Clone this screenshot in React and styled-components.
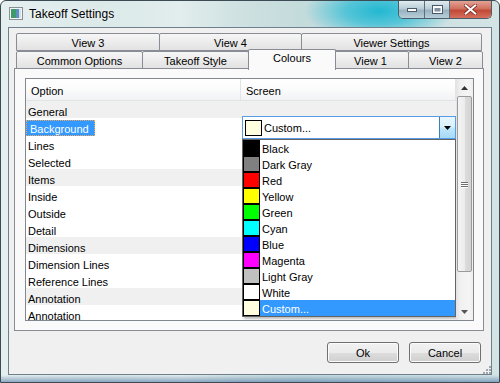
import styled, { createGlobalStyle } from "styled-components";

const GlobalStyle = createGlobalStyle`
  html, body {
    margin: 0;
    padding: 0;
    background: #ffffff;
  }
  * {
    box-sizing: border-box;
  }
`;

const topTabs = [
  { label: "View 3", width: 144 },
  { label: "View 4", width: 143 },
  { label: "Viewer Settings", width: 181 },
];

const bottomTabs = [
  { label: "Common Options", width: 127 },
  { label: "Takeoff Style", width: 107 },
  { label: "Colours", width: 84, active: true },
  { label: "View 1", width: 77 },
  { label: "View 2", width: 75 },
];

const options = [
  { label: "General", group: true },
  { label: "Background", selected: true },
  { label: "Lines" },
  { label: "Selected" },
  { label: "Items", group: true },
  { label: "Inside" },
  { label: "Outside" },
  { label: "Detail" },
  { label: "Dimensions", group: true },
  { label: "Dimension Lines" },
  { label: "Reference Lines" },
  { label: "Annotation", group: true },
  { label: "Annotation" },
];

const colours = [
  ["Black", "#000000"],
  ["Dark Gray", "#808080"],
  ["Red", "#ff0000"],
  ["Yellow", "#ffff00"],
  ["Green", "#00ff00"],
  ["Cyan", "#00ffff"],
  ["Blue", "#0000ff"],
  ["Magenta", "#ff00ff"],
  ["Light Gray", "#c0c0c0"],
  ["White", "#ffffff"],
  ["Custom...", "#ffffe0"],
];

export default function App() {
  return (
    <>
      <GlobalStyle />
      <Window>
        <TitleBar>
          <AppIcon>
            <svg width="14" height="13" viewBox="0 0 14 13">
              <rect x="0.5" y="0.5" width="13" height="12" fill="#f4f4f4" stroke="#8a8f96" />
              <rect x="2" y="2" width="5" height="9" fill="#3f9a6a" />
              <rect x="7" y="2" width="3" height="9" fill="#5c8fc4" />
              <rect x="10" y="2" width="2" height="9" fill="#d7dde4" />
            </svg>
          </AppIcon>
          <Title>Takeoff Settings</Title>
          <CaptionButtons>
            <CaptionButton $kind="min">
              <svg width="10" height="5" viewBox="0 0 10 5">
                <rect x="0.5" y="1.5" width="9" height="3" fill="#ffffff" stroke="#4a5a6a" />
              </svg>
            </CaptionButton>
            <CaptionButton $kind="max">
              <svg width="11" height="9" viewBox="0 0 11 9">
                <rect x="0.5" y="0.5" width="10" height="8" fill="#ffffff" stroke="#4a5a6a" />
                <rect x="2.5" y="3" width="6" height="3.5" fill="#7f92a4" />
              </svg>
            </CaptionButton>
            <CaptionButton $kind="close">
              <svg width="13" height="11" viewBox="0 0 13 11">
                <path
                  d="M1 1 L12 10 M12 1 L1 10"
                  stroke="#7a2a22"
                  strokeWidth="3.6"
                  strokeLinecap="round"
                />
                <path
                  d="M1.5 1.3 L11.5 9.7 M11.5 1.3 L1.5 9.7"
                  stroke="#ffffff"
                  strokeWidth="2"
                  strokeLinecap="round"
                />
              </svg>
            </CaptionButton>
          </CaptionButtons>
        </TitleBar>

        <Client>
          <TabStrip>
            <TabRow>
              {topTabs.map((t) => (
                <Tab key={t.label} $width={t.width}>
                  {t.label}
                </Tab>
              ))}
            </TabRow>
            <TabRow>
              {bottomTabs.map((t) => (
                <Tab key={t.label} $width={t.width} $active={t.active}>
                  {t.label}
                </Tab>
              ))}
            </TabRow>
          </TabStrip>

          <Panel>
            <ListView>
              <ListMain>
                <Header>
                  <HeaderCell $width={215}>Option</HeaderCell>
                  <HeaderCell>Screen</HeaderCell>
                </Header>
                <Body>
                  {options.map((o, i) => (
                    <Row key={i} $group={o.group}>
                      {o.selected ? <Selected>{o.label}</Selected> : o.label}
                    </Row>
                  ))}

                  <Combo>
                    <Swatch $color="#ffffe0" />
                    <ComboText>Custom...</ComboText>
                    <ComboButton>
                      <svg width="7" height="4" viewBox="0 0 7 4">
                        <path d="M0 0 H7 L3.5 4 Z" fill="#000" />
                      </svg>
                    </ComboButton>
                  </Combo>

                  <DropList>
                    {colours.map(([name, c]) => (
                      <DropItem key={name} $active={name === "Custom..."}>
                        <Swatch $color={c} />
                        <span>{name}</span>
                      </DropItem>
                    ))}
                  </DropList>
                </Body>
              </ListMain>

              <ScrollBar>
                <ScrollArrow>
                  <svg width="7" height="4" viewBox="0 0 7 4">
                    <path d="M0 4 H7 L3.5 0 Z" fill="#333" />
                  </svg>
                </ScrollArrow>
                <Thumb>
                  <Grip />
                  <Grip />
                  <Grip />
                </Thumb>
                <Track />
                <ScrollArrow>
                  <svg width="7" height="4" viewBox="0 0 7 4">
                    <path d="M0 0 H7 L3.5 4 Z" fill="#555" />
                  </svg>
                </ScrollArrow>
              </ScrollBar>
            </ListView>
          </Panel>

          <ButtonRow>
            <Button>Ok</Button>
            <Button>Cancel</Button>
          </ButtonRow>

          <SizeGrip>
            <svg width="9" height="9" viewBox="0 0 9 9">
              {[
                [7, 1],
                [7, 4],
                [4, 4],
                [7, 7],
                [4, 7],
                [1, 7],
              ].map(([x, y]) => (
                <rect key={`${x}-${y}`} x={x} y={y} width="2" height="2" fill="#a0a6ad" />
              ))}
            </svg>
          </SizeGrip>
        </Client>
      </Window>
    </>
  );
}

const Window = styled.div`
  width: 500px;
  height: 383px;
  border: 1px solid #3d4b54;
  border-radius: 6px 6px 0 0;
  padding: 0 7px 7px 7px;
  display: flex;
  flex-direction: column;
  font-family: "Liberation Sans", Arial, sans-serif;
  background:
    radial-gradient(ellipse 75px 30px at 378px 10px, #22b8d2 0%, rgba(38, 186, 212, 0.7) 45%, rgba(38, 186, 212, 0) 100%),
    linear-gradient(0deg, rgba(70, 110, 160, 0.55) 0, rgba(70, 110, 160, 0) 7px),
    linear-gradient(90deg, #e6efef 0%, #dbe9e9 20%, #e2eded 36%, #cfe1e1 48%, #c4dbdc 60%, #d3e4e5 100%);
`;

const TitleBar = styled.div`
  height: 26px;
  display: flex;
  align-items: flex-start;
`;

const AppIcon = styled.div`
  margin: 6px 0 0 1px;
  width: 14px;
  height: 13px;
  display: flex;
`;

const Title = styled.div`
  margin: 6px 0 0 6px;
  font-size: 12px;
  line-height: 14px;
  color: #000;
  text-shadow: 0 0 6px rgba(255, 255, 255, 0.9);
`;

const CaptionButtons = styled.div`
  margin-left: auto;
  display: flex;
  height: 18px;
  border: 1px solid #4b5d6b;
  border-top: none;
  border-radius: 0 0 5px 5px;
  overflow: hidden;
`;

const CaptionButton = styled.div`
  width: ${(p) => (p.$kind === "close" ? 42 : 25)}px;
  display: flex;
  align-items: center;
  justify-content: center;
  border-left: ${(p) => (p.$kind === "min" ? "none" : "1px solid #5c6e7c")};
  background: ${(p) =>
    p.$kind === "close"
      ? "linear-gradient(180deg, #e3a395 0%, #d0705f 45%, #c14a36 55%, #d6705e 100%)"
      : "linear-gradient(180deg, #e1ecef 0%, #b9cdd6 45%, #98b2c0 55%, #b7cfd9 100%)"};
`;

const Client = styled.div`
  position: relative;
  flex: 1;
  border: 1px solid #6f7f8b;
  background: #f0f0f0;
  padding: 5px 7px 0 5px;
  display: flex;
  flex-direction: column;
  font-size: 11px;
  color: #000;
`;

const TabStrip = styled.div`
  padding-left: 2px;
  display: flex;
  flex-direction: column;
`;

const TabRow = styled.div`
  display: flex;
  height: 18px;
`;

const Tab = styled.div`
  position: relative;
  width: ${(p) => p.$width + (p.$active ? 4 : 0)}px;
  height: ${(p) => (p.$active ? 21 : 18)}px;
  margin-top: ${(p) => (p.$active ? -2 : 0)}px;
  margin-left: -1px;
  margin-right: ${(p) => (p.$active ? -3 : 0)}px;
  padding-top: ${(p) => (p.$active ? 2 : 3)}px;
  z-index: ${(p) => (p.$active ? 2 : 1)};
  border: 1px solid #898c95;
  border-bottom: ${(p) => (p.$active ? "none" : "1px solid #898c95")};
  border-radius: 2px 2px 0 0;
  text-align: center;
  line-height: 12px;
  background: ${(p) =>
    p.$active ? "#fafafa" : "linear-gradient(180deg, #f6f6f6 0%, #ececec 50%, #e2e2e2 100%)"};
  white-space: nowrap;

  &:first-child {
    margin-left: ${(p) => (p.$active ? -2 : 0)}px;
  }
`;

const Panel = styled.div`
  width: 470px;
  height: 263px;
  margin-top: -1px;
  border: 1px solid #898c95;
  background: #fafafa;
  padding: 9px 9px 9px 10px;
  display: flex;
`;

const ListView = styled.div`
  flex: 1;
  border: 1px solid #828790;
  background: #ffffff;
  display: flex;
  overflow: hidden;
`;

const ListMain = styled.div`
  flex: 1;
  display: flex;
  flex-direction: column;
  min-width: 0;
`;

const Header = styled.div`
  height: 22px;
  flex: none;
  display: flex;
  background: linear-gradient(180deg, #ffffff 0%, #fbfbfc 50%, #f1f2f4 100%);
  border-bottom: 1px solid #e2e3e5;
`;

const HeaderCell = styled.div`
  ${(p) => (p.$width ? `width: ${p.$width}px;` : "flex: 1;")}
  padding: 6px 0 0 5px;
  border-right: 1px solid #e3e4e6;
  line-height: 12px;
`;

const Body = styled.div`
  position: relative;
  flex: 1;
  overflow: hidden;
`;

const Row = styled.div`
  flex: none;
  height: 17px;
  padding: 4px 0 0 2px;
  line-height: 15px;
  background: ${(p) => (p.$group ? "#f0f0f0" : "#ffffff")};
  white-space: nowrap;
`;

const Selected = styled.span`
  display: inline-block;
  margin: -2px 0 0 -2px;
  height: 16px;
  line-height: 16px;
  padding: 0 5px 0 3px;
  background: #3399ff;
  color: #ffffff;
  border: 1px dotted #f0a860;
  vertical-align: top;
`;

const Combo = styled.div`
  position: absolute;
  left: 216px;
  top: 15px;
  width: 214px;
  height: 23px;
  border: 1px solid #569de5;
  background: #ffffff;
  display: flex;
  align-items: center;
  padding-left: 2px;
`;

const ComboText = styled.span`
  margin-left: 2px;
  padding-top: 1px;
`;

const ComboButton = styled.div`
  margin-left: auto;
  width: 16px;
  height: 21px;
  border-left: 1px solid #3c7fb1;
  background: linear-gradient(180deg, #eaf6fd 0%, #d9f0fc 45%, #bee6fd 55%, #a7d9f5 100%);
  display: flex;
  align-items: center;
  justify-content: center;
`;

const Swatch = styled.span`
  flex: none;
  width: 17px;
  height: 16px;
  border: 1px solid #000000;
  background: ${(p) => p.$color};
`;

const DropList = styled.div`
  position: absolute;
  left: 216px;
  top: 38px;
  width: 214px;
  border: 1px solid #646464;
  background: #ffffff;
  box-shadow: 2px 2px 2px rgba(0, 0, 0, 0.25);
  z-index: 3;
`;

const DropItem = styled.div`
  height: 16px;
  display: flex;
  align-items: center;
  background: ${(p) => (p.$active ? "#3399ff" : "#ffffff")};
  color: ${(p) => (p.$active ? "#ffffff" : "#000000")};

  span:last-child {
    margin-left: 2px;
    padding-top: 2px;
    line-height: 14px;
  }
`;

const ScrollBar = styled.div`
  width: 17px;
  display: flex;
  flex-direction: column;
  background: linear-gradient(90deg, #e3e3e3 0%, #f0f0f0 25%, #f5f5f5 75%, #eeeeee 100%);
`;

const ScrollArrow = styled.div`
  height: 17px;
  display: flex;
  align-items: center;
  justify-content: center;
`;

const Thumb = styled.div`
  height: 176px;
  margin: 0 1px 0 1px;
  border: 1px solid #9a9a9a;
  border-radius: 2px;
  background: linear-gradient(90deg, #f4f4f4 0%, #ececec 50%, #dcdcdc 55%, #d3d3d3 100%);
  display: flex;
  flex-direction: column;
  align-items: center;
  justify-content: center;
  gap: 1px;
`;

const Grip = styled.div`
  width: 7px;
  height: 1px;
  background: #6e6e6e;
  box-shadow: 0 1px 0 #ffffff;
`;

const Track = styled.div`
  flex: 1;
`;

const ButtonRow = styled.div`
  display: flex;
  justify-content: flex-end;
  gap: 10px;
  padding: 11px 3px 0 0;
`;

const Button = styled.div`
  width: 72px;
  height: 21px;
  border: 1px solid #707070;
  border-radius: 3px;
  display: flex;
  align-items: center;
  justify-content: center;
  background: linear-gradient(180deg, #f2f2f2 0%, #ebebeb 50%, #dddddd 51%, #cfcfcf 100%);
  box-shadow: inset 0 0 0 1px #fbfbfb;
`;

const SizeGrip = styled.div`
  position: absolute;
  right: 0;
  bottom: 0;
  width: 9px;
  height: 9px;
  display: flex;
`;
